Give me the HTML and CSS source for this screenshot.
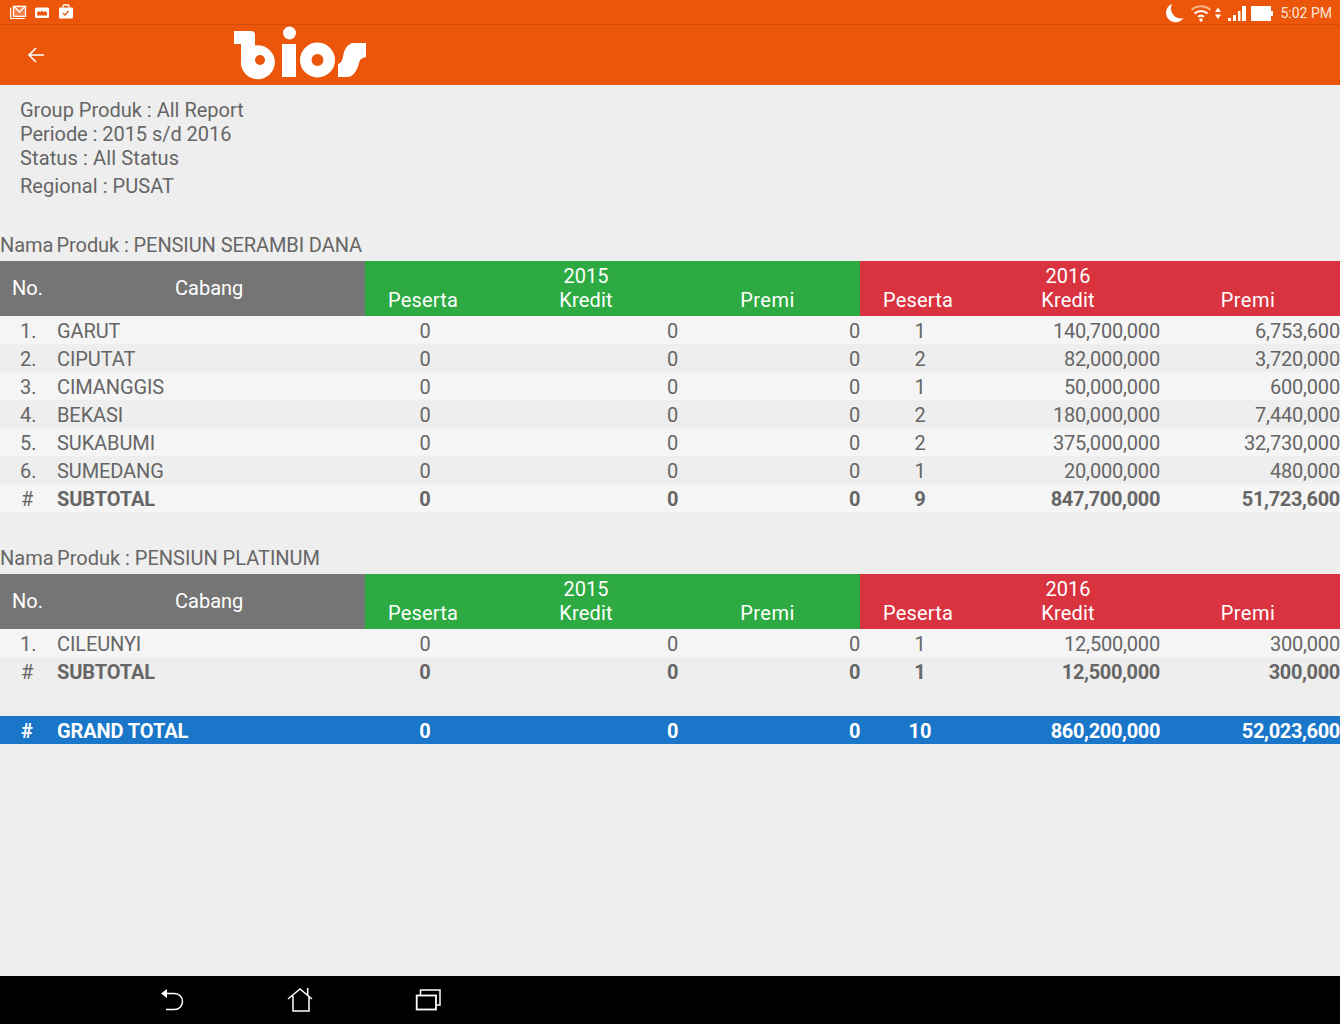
FILE: index.html
```html
<!DOCTYPE html>
<html lang="id">
<head>
	<meta charset="UTF-8">
	<title>Bios Report</title>
	<link rel="stylesheet" href="styles.css">
</head>
<body>
	<div class="status-bar">
		<svg class="status-left" width="80" height="24" viewBox="0 0 80 24">
			<!-- mail -->
			<path d="M10.700 7.500v11h14" fill="none" stroke="#fff" stroke-width="1.200"/>
			<rect x="13.500" y="6.300" width="12" height="10" fill="#f4804a" stroke="#fff" stroke-width="1.300"/>
			<path d="M14 6.500l5.500 5.500 5.500-5.500" fill="none" stroke="#fff" stroke-width="1.300"/>
			<!-- photo -->
			<rect x="35" y="7.500" width="14" height="10.500" rx="1.500" fill="#fff"/>
			<path d="M37 15.500v-3l2-1.500 1.500 1.200 1.500-1.600 1.500 1.600 1.500-1.200 2 1.500v3z" fill="#ec560a"/>
			<!-- bag -->
			<rect x="59" y="7.500" width="14" height="11" rx="1" fill="#fff"/>
			<path d="M63 7.500V6q0-1 1-1h4q1 0 1 1v1.500" fill="none" stroke="#fff" stroke-width="1.300"/>
			<path d="M63 13l2 2 3.500-4" fill="none" stroke="#ec560a" stroke-width="1.300"/>
		</svg>
		<div class="status-right">
			<svg width="110" height="20" viewBox="0 0 110 20">
				<path d="M7 1A9.500 9.500 0 1 0 18.500 15 10 10 0 0 1 7 1z" fill="#fff"/>
				<path d="M26.500 7a14 14 0 0 1 19 0" fill="none" stroke="#f8b48c" stroke-width="2"/>
				<path d="M29.500 10.500a10 10 0 0 1 13 0M33 13.800a5 5 0 0 1 6 0" fill="none" stroke="#fff" stroke-width="2"/>
				<circle cx="36" cy="17" r="1.700" fill="#fff"/>
				<path d="M50 9l3-4.500 3 4.500zM50 11.500l3 4.500 3-4.500z" fill="#fff"/>
				<path d="M63 15h3v3h-3zM68 12h3v6h-3zM73 8h2.500v10h-2.500zM77 3h4v15h-4z" fill="#fff"/>
				<rect x="86" y="3" width="20" height="15" fill="#fff"/>
				<rect x="106" y="8" width="2" height="5" fill="#fff"/>
			</svg>
			<span class="clock">5:02 PM</span>
		</div>
	</div>

	<div class="app-bar">
		<svg class="back" width="18" height="18" viewBox="0 0 18 18">
			<path d="M17 9H2M9 2L2 9l7 7" fill="none" stroke="#fff" stroke-width="1.600"/>
		</svg>
		<svg class="logo" role="img" aria-label="bios" width="140" height="60" viewBox="230 25 140 60">
			<path d="M234 31h17q4 0 4 4v10.500A17 17 0 1 1 241 60V44h-7z" fill="#fff"/>
			<circle cx="260" cy="60" r="5" fill="#ec560a"/>
			<circle cx="289.500" cy="33" r="6.500" fill="#fff"/>
			<rect x="282" y="44" width="14" height="33" fill="#fff"/>
			<circle cx="317.500" cy="60" r="11.750" fill="none" stroke="#fff" stroke-width="11.500"/>
			<path d="M366 43H353C347 44 344 50 343 57 342 61 341 63 338 64V77H347C353 77 357 71 359 63 360 59 362 58 366 57z" fill="#fff"/>
		</svg>
	</div>

	<div class="info">
		<div>Group Produk : All Report</div>
		<div class="info-periode">Periode : 2015 s/d 2016</div>
		<div class="info-status">Status : All Status</div>
		<div class="info-last">Regional : PUSAT</div>
	</div>

	<div class="product-title first"><span class="nama">Nama</span> Produk : PENSIUN SERAMBI DANA</div>
	<div class="table-head">
		<div class="head-no">No.</div>
		<div class="head-cabang">Cabang</div>
		<div class="group green">
			<div class="year">2015</div>
			<div>Peserta</div><div>Kredit</div><div class="premi">Premi</div>
		</div>
		<div class="group red">
			<div class="year">2016</div>
			<div>Peserta</div><div>Kredit</div><div class="premi">Premi</div>
		</div>
	</div>
	<div class="row"><div class="c-no">1.</div><div class="c-name">GARUT</div><div class="c-p1">0</div><div class="c-num">0</div><div class="c-num">0</div><div class="c-p2">1</div><div class="c-num">140,700,000</div><div class="c-num">6,753,600</div></div>
	<div class="row alt"><div class="c-no">2.</div><div class="c-name">CIPUTAT</div><div class="c-p1">0</div><div class="c-num">0</div><div class="c-num">0</div><div class="c-p2">2</div><div class="c-num">82,000,000</div><div class="c-num">3,720,000</div></div>
	<div class="row"><div class="c-no">3.</div><div class="c-name">CIMANGGIS</div><div class="c-p1">0</div><div class="c-num">0</div><div class="c-num">0</div><div class="c-p2">1</div><div class="c-num">50,000,000</div><div class="c-num">600,000</div></div>
	<div class="row alt"><div class="c-no">4.</div><div class="c-name">BEKASI</div><div class="c-p1">0</div><div class="c-num">0</div><div class="c-num">0</div><div class="c-p2">2</div><div class="c-num">180,000,000</div><div class="c-num">7,440,000</div></div>
	<div class="row"><div class="c-no">5.</div><div class="c-name">SUKABUMI</div><div class="c-p1">0</div><div class="c-num">0</div><div class="c-num">0</div><div class="c-p2">2</div><div class="c-num">375,000,000</div><div class="c-num">32,730,000</div></div>
	<div class="row alt"><div class="c-no">6.</div><div class="c-name">SUMEDANG</div><div class="c-p1">0</div><div class="c-num">0</div><div class="c-num">0</div><div class="c-p2">1</div><div class="c-num">20,000,000</div><div class="c-num">480,000</div></div>
	<div class="row subtotal"><div class="c-no">#</div><div class="c-name">SUBTOTAL</div><div class="c-p1">0</div><div class="c-num">0</div><div class="c-num">0</div><div class="c-p2">9</div><div class="c-num">847,700,000</div><div class="c-num">51,723,600</div></div>

	<div class="product-title"><span class="nama">Nama</span> Produk : PENSIUN PLATINUM</div>
	<div class="table-head">
		<div class="head-no">No.</div>
		<div class="head-cabang">Cabang</div>
		<div class="group green">
			<div class="year">2015</div>
			<div>Peserta</div><div>Kredit</div><div class="premi">Premi</div>
		</div>
		<div class="group red">
			<div class="year">2016</div>
			<div>Peserta</div><div>Kredit</div><div class="premi">Premi</div>
		</div>
	</div>
	<div class="row"><div class="c-no">1.</div><div class="c-name">CILEUNYI</div><div class="c-p1">0</div><div class="c-num">0</div><div class="c-num">0</div><div class="c-p2">1</div><div class="c-num">12,500,000</div><div class="c-num">300,000</div></div>
	<div class="row alt subtotal"><div class="c-no">#</div><div class="c-name">SUBTOTAL</div><div class="c-p1">0</div><div class="c-num">0</div><div class="c-num">0</div><div class="c-p2">1</div><div class="c-num">12,500,000</div><div class="c-num">300,000</div></div>

	<div class="row grand"><div class="c-no">#</div><div class="c-name">GRAND TOTAL</div><div class="c-p1">0</div><div class="c-num">0</div><div class="c-num">0</div><div class="c-p2">10</div><div class="c-num">860,200,000</div><div class="c-num">52,023,600</div></div>

	<div class="spacer"></div>

	<div class="nav-bar">
		<svg width="26" height="26" viewBox="0 0 26 26">
			<path d="M5 6.500H15.500a8 8 0 0 1 0 16H7" fill="none" stroke="#fff" stroke-width="1.500"/>
			<path d="M8 2v9L2 6.500z" fill="#fff"/>
		</svg>
		<svg width="26" height="26" viewBox="0 0 26 26">
			<path d="M1 12L13 2 25 12M6 9v15h16V9M20.700 1v8" fill="none" stroke="#fff" stroke-width="1.500"/>
		</svg>
		<svg width="26" height="26" viewBox="0 0 26 26">
			<path d="M5.500 8V3H25V18H21.500" fill="none" stroke="#fff" stroke-width="1.500"/>
			<rect x="1.700" y="8.500" width="19.300" height="14" fill="none" stroke="#fff" stroke-width="1.800"/>
		</svg>
	</div>
</body>
</html>
```

FILE: styles.css
```css
* { box-sizing: border-box; }

html, body { height: 100%; }

body {
	margin: 0;
	display: flex;
	flex-direction: column;
	height: 1024px;
	overflow: hidden;
	background: #eeeeee;
	color: #666666;
	font-family: Roboto, "Liberation Sans", sans-serif;
	font-size: 20px;
	line-height: 24px;
}

.status-bar {
	height: 25px;
	flex: none;
	display: flex;
	justify-content: space-between;
	align-items: flex-start;
	background: #ec560a;
	border-bottom: 1px solid #d44d08;
}
.status-left { display: block; }
.status-right { display: flex; align-items: center; padding: 2px 8px 0 0; }
.clock { margin-left: 5px; color: #fde6d8; font-size: 14px; line-height: 22px; }

.app-bar {
	height: 60px;
	flex: none;
	display: flex;
	align-items: center;
	background: #ec560a;
	padding-left: 27px;
}
.logo { margin-left: 185px; }

.info { padding: 13px 20px 0; height: 148px; flex: none; }
.info-periode { letter-spacing: -0.05px; }
.info-status { letter-spacing: 0.12px; }
.info-last { margin-top: 4px; letter-spacing: 0.05px; }

.product-title { height: 28px; margin-top: 34px; }
.product-title.first { margin-top: 0; letter-spacing: -0.09px; }
.nama { margin-right: -1.5px; }

.table-head {
	display: flex;
	height: 55px;
	color: #fff;
}
.head-no { width: 57px; padding-left: 12px; line-height: 54px; background: #757575; }
.head-cabang { width: 308px; padding-left: 118px; line-height: 54px; background: #757575; }

.group {
	display: grid;
	grid-template-rows: 24px 24px;
	text-align: center;
	padding-top: 3px;
	letter-spacing: 0.2px;
}
.group .year { grid-column: 2; letter-spacing: 0; }
.group div:nth-child(2) { grid-column: 1; }
.group .premi { letter-spacing: 0.5px; }
.green { grid-template-columns: 116px 197px 182px; width: 495px; background: #2dab42; }
.green .year, .green div:nth-child(3) { padding-left: 13px; }
.green .premi { padding-right: 3px; }
.red { grid-template-columns: 116px 184px 180px; width: 480px; background: #d93340; }
.red .premi { padding-right: 4px; }

.row {
	display: grid;
	grid-template-columns: 57px 308px 120px 193px 182px 120px 180px 180px;
	height: 28px;
	line-height: 30px;
	background: #f5f5f5;
}
.row.alt { background: #eeeeee; }
.c-no { padding-left: 20px; }
.c-name { letter-spacing: -0.1px; }
.c-p1, .c-p2 { text-align: center; }
.c-num { text-align: right; letter-spacing: -0.18px; }

.subtotal { font-weight: bold; }
.subtotal .c-num, .grand .c-num { letter-spacing: -0.35px; }

.row.grand {
	margin-top: 31px;
	font-weight: bold;
	color: #fff;
	background: #1a76c8;
}
.grand .c-no, .subtotal .c-no { padding-left: 21px; font-weight: normal; }
.grand .c-no { font-weight: bold; }

.spacer { flex: 1; }

.nav-bar {
	height: 48px;
	flex: none;
	display: flex;
	align-items: center;
	gap: 102px;
	padding-left: 159px;
	background: #000;
}
```
